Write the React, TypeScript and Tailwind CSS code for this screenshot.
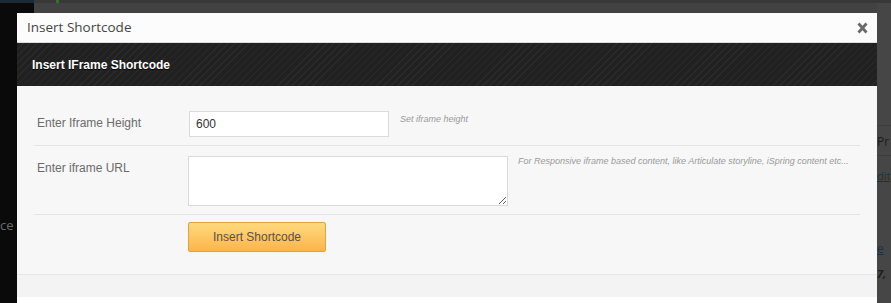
import React from 'react'

const App: React.FC = () => {
  return (
    <div className="flex w-[891px] h-[303px] overflow-hidden bg-[#444444] font-['Liberation_Sans',Arial,sans-serif]">
      {/* left backdrop */}
      <div className="w-[17px] shrink-0 flex flex-col bg-[#0a0a0a]">
        <div className="h-[3px] bg-[#1c2a35]" />
        <div className="mt-[215px] text-[13px] leading-[15px] text-[#6a6a6a] font-['Open_Sans',sans-serif]">ce</div>
      </div>

      {/* centre column */}
      <div className="w-[860px] shrink-0 flex flex-col">
        <div className="h-[13px] flex">
          <div className="w-[17px] flex flex-col">
            <div className="h-[3px] bg-[#1c2a35]" />
            <div className="flex-1 bg-[#0a0a0a]" />
          </div>
          <div className="flex-1 flex flex-col">
            <div className="h-[3px] bg-[#383838] flex">
              <div className="ml-[22px] w-[3px] bg-[#3d6b2a]" />
            </div>
            <div className="flex-1 bg-[#424242]" />
          </div>
        </div>

        {/* modal */}
        <div className="flex-1 flex flex-col bg-white">
          <div className="h-[30px] shrink-0 flex items-center justify-between bg-[#fcfcfc] border-b border-[#dddddd] pl-[10px] pr-[9px]">
            <span className="text-[13.5px] font-medium text-[#444444] font-['Open_Sans',sans-serif]">Insert Shortcode</span>
            <svg width="11" height="12" viewBox="0 0 11 12">
              <path d="M1.5 1.5 L9.5 10.5 M9.5 1.5 L1.5 10.5" stroke="#6a6a6a" strokeWidth="2.8" />
            </svg>
          </div>

          <div className="h-[43px] shrink-0 flex items-center pl-[15px] bg-[repeating-linear-gradient(135deg,#212121_0px,#212121_4px,#2a2a2a_4px,#2a2a2a_5px)]">
            <span className="text-[12px] font-bold text-white [text-shadow:0_1px_0_#000]">Insert IFrame Shortcode</span>
          </div>

          <div className="h-[189px] shrink-0 bg-[#f7f7f7] px-[17px] pt-[15px] border-b border-[#e6e6e6]">
            {/* row 1 */}
            <div className="flex pt-[10px] pb-[8px] border-b border-[#e4e4e4]">
              <div className="w-[154px] shrink-0 pl-[3px] pt-[6px] text-[12px] leading-[13px] text-[#6b6b6b]">Enter Iframe Height</div>
              <input
                defaultValue="600"
                className="ml-px w-[200px] h-[26px] bg-white border border-[#dadada] px-[6px] text-[12px] text-[#333333] outline-none"
              />
              <div className="ml-[11px] mt-[3px] text-[9px] leading-[11px] italic text-[#9a9a9a]">Set iframe height</div>
            </div>

            {/* row 2 */}
            <div className="flex pt-[10px] pb-[8px] border-b border-[#e4e4e4]">
              <div className="w-[154px] shrink-0 pl-[3px] pt-[6px] text-[12px] leading-[13px] text-[#6b6b6b]">Enter iframe URL</div>
              <textarea className="w-[320px] h-[50px] bg-white border border-[#dadada] outline-none" />
              <div className="ml-[10px] text-[9px] leading-[11px] italic text-[#9a9a9a]">
                For Responsive iframe based content, like Articulate storyline, iSpring content etc...
              </div>
            </div>

            {/* row 3 */}
            <div className="flex pt-[7px]">
              <div className="w-[154px] shrink-0" />
              <button className="w-[138px] h-[30px] rounded-[2px] border border-[#e3a23d] bg-gradient-to-b from-[#fed97d] to-[#fbb54a] text-[12px] text-[#5a5046]">
                Insert Shortcode
              </button>
            </div>
          </div>

          <div className="h-[22px] shrink-0 bg-[#f3f3f3]" />
          <div className="flex-1 bg-white" />
        </div>
      </div>

      {/* right backdrop */}
      <div className="w-[14px] shrink-0 flex flex-col bg-[#464646] font-['Open_Sans',sans-serif]">
        <div className="h-[3px] bg-[#383838]" />
        <div className="h-[122px]" />
        <div className="h-px bg-[#3e3e3e]" />
        <div className="h-[29px] pt-[9px] text-[12px] leading-[14px] text-[#1c1c1c]">Pr</div>
        <div className="h-px bg-[#3e3e3e]" />
        <div className="mt-[13px] text-[11px] leading-[14px] text-[#1a3144] underline">dit</div>
        <div className="mt-[59px] text-[12px] leading-[14px] text-[#1a3144] underline">e</div>
        <div className="mt-[11px] text-[11px] leading-[14px] font-bold italic text-[#1c1c1c]">7,</div>
      </div>
    </div>
  )
}

export default App
